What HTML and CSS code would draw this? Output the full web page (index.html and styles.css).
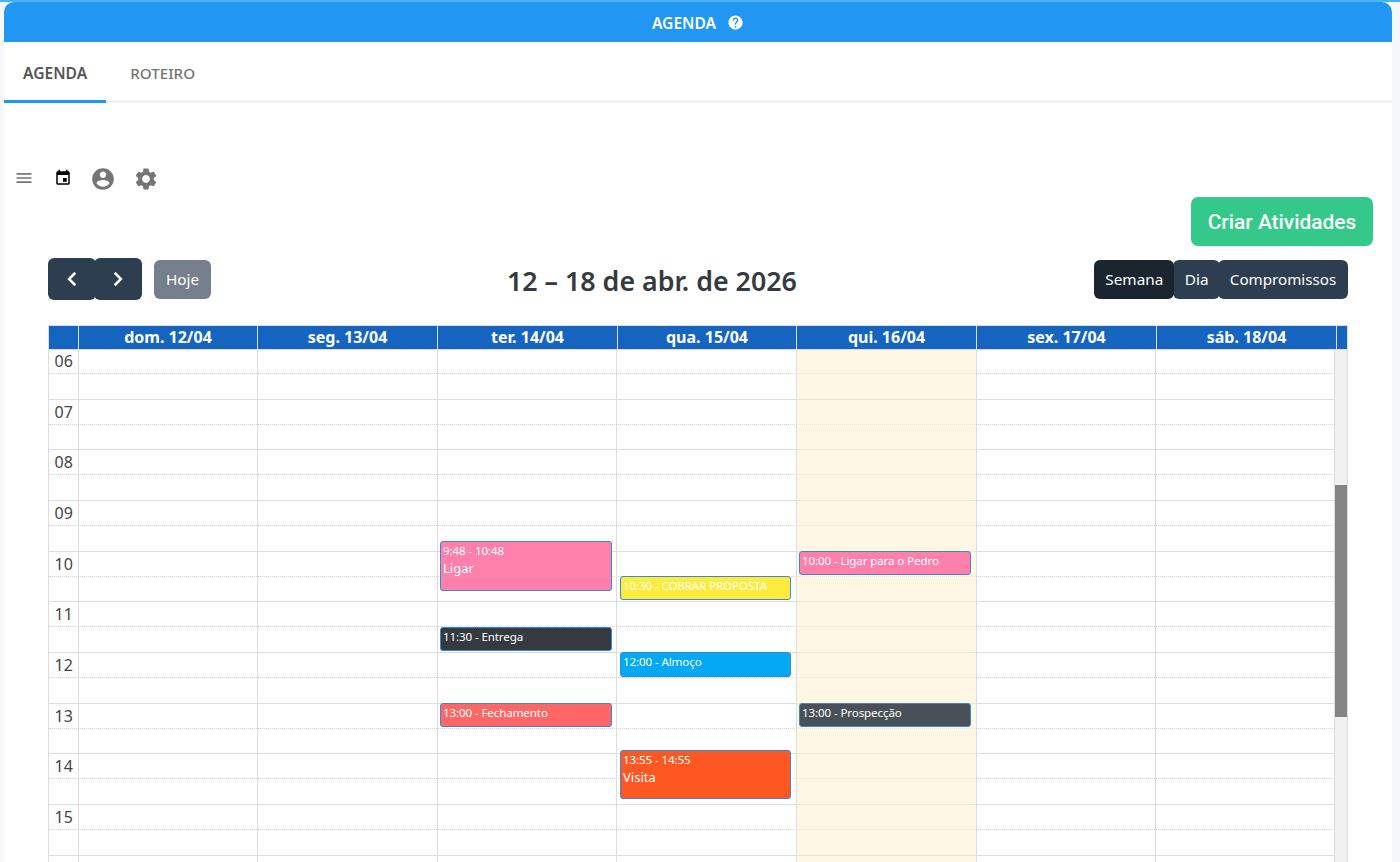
FILE: index.html
```html
<!DOCTYPE html>
<html lang="pt-BR">
<head>
<meta charset="utf-8">
<title>Agenda</title>
<link rel="stylesheet" href="styles.css">
</head>
<body>
<div class="card">
  <header class="topbar">
    <span>AGENDA</span>
    <svg class="help" viewBox="0 0 24 24"><path fill="#fff" d="M12 2C6.48 2 2 6.48 2 12s4.48 10 10 10 10-4.48 10-10S17.52 2 12 2zm1 17h-2v-2h2v2zm2.07-7.75l-.9.92C13.45 12.9 13 13.5 13 15h-2v-.5c0-1.1.45-2.1 1.17-2.83l1.24-1.26c.37-.36.59-.86.59-1.41 0-1.1-.9-2-2-2s-2 .9-2 2H8c0-2.21 1.79-4 4-4s4 1.79 4 4c0 .88-.36 1.68-.93 2.25z"/></svg>
  </header>
  <nav class="tabs">
    <a class="tab active">AGENDA</a>
    <a class="tab">ROTEIRO</a>
  </nav>
  <div class="icons">
    <svg class="ic ic-menu" viewBox="0 0 24 24"><path fill="#757575" d="M3 18h18v-2H3v2zm0-5h18v-2H3v2zm0-7v2h18V6H3z"/></svg>
    <svg class="ic ic-event" viewBox="0 0 24 24"><path fill="#000" d="M17 12h-5v5h5v-5zM16 1v2H8V1H6v2H5c-1.11 0-1.99.9-1.99 2L3 19c0 1.1.89 2 2 2h14c1.1 0 2-.9 2-2V5c0-1.1-.9-2-2-2h-1V1h-2zm3 18H5V8h14v11z"/></svg>
    <svg class="ic ic-user" viewBox="0 0 24 24"><path fill="#757575" d="M12 2C6.48 2 2 6.48 2 12s4.48 10 10 10 10-4.48 10-10S17.52 2 12 2zm0 3c1.66 0 3 1.34 3 3s-1.34 3-3 3-3-1.34-3-3 1.34-3 3-3zm0 14.2c-2.5 0-4.71-1.28-6-3.22.03-1.99 4-3.08 6-3.08 1.99 0 5.97 1.09 6 3.08-1.29 1.94-3.5 3.22-6 3.22z"/></svg>
    <svg class="ic ic-gear" viewBox="0 0 24 24"><path fill="#757575" d="M19.14 12.94c.04-.3.06-.61.06-.94 0-.32-.02-.64-.07-.94l2.03-1.58c.18-.14.23-.41.12-.61l-1.92-3.32c-.12-.22-.37-.29-.59-.22l-2.39.96c-.5-.38-1.03-.7-1.62-.94l-.36-2.54c-.04-.24-.24-.41-.48-.41h-3.84c-.24 0-.43.17-.47.41l-.36 2.54c-.59.24-1.13.57-1.62.94l-2.39-.96c-.22-.08-.47 0-.59.22L2.74 8.87c-.12.21-.08.47.12.61l2.03 1.58c-.05.3-.09.63-.09.94s.02.64.07.94l-2.03 1.58c-.18.14-.23.41-.12.61l1.92 3.32c.12.22.37.29.59.22l2.39-.96c.5.38 1.03.7 1.62.94l.36 2.54c.05.24.24.41.48.41h3.84c.24 0 .44-.17.47-.41l.36-2.54c.59-.24 1.13-.56 1.62-.94l2.39.96c.22.08.47 0 .59-.22l1.92-3.32c.12-.22.07-.47-.12-.61l-2.01-1.58zM12 15.6c-1.98 0-3.6-1.62-3.6-3.6s1.62-3.6 3.6-3.6 3.6 1.62 3.6 3.6-1.62 3.6-3.6 3.6z"/></svg>
  </div>
  <div class="create-row"><button class="create">Criar Atividades</button></div>
  <section class="calendar">
    <div class="toolbar">
      <div class="tb-left">
        <button class="btn nav"><svg viewBox="0 0 24 24"><path d="M16 4.5l-7.5 7.5 7.5 7.5" fill="none" stroke="#fff" stroke-width="3"/></svg></button>
        <button class="btn nav next"><svg viewBox="0 0 24 24"><path d="M8 4.5l7.5 7.5-7.5 7.5" fill="none" stroke="#fff" stroke-width="3"/></svg></button>
        <button class="btn today">Hoje</button>
      </div>
      <h2 class="title">12 – 18 de abr. de 2026</h2>
      <div class="tb-right">
        <button class="btn view active">Semana</button>
        <button class="btn view dia">Dia</button>
        <button class="btn view comp">Compromissos</button>
      </div>
    </div>
    <div class="head">
      <div class="hcell axis"></div>
      <div class="hcell">dom. 12/04</div>
      <div class="hcell">seg. 13/04</div>
      <div class="hcell">ter. 14/04</div>
      <div class="hcell">qua. 15/04</div>
      <div class="hcell">qui. 16/04</div>
      <div class="hcell">sex. 17/04</div>
      <div class="hcell">sáb. 18/04</div>
      <div class="hcell gutter"></div>
    </div>
    <div class="body">
      <div class="grid">
        <div class="slots">
          <div class="hour"><span class="label">06</span></div>
          <div class="hour"><span class="label">07</span></div>
          <div class="hour"><span class="label">08</span></div>
          <div class="hour"><span class="label">09</span></div>
          <div class="hour"><span class="label">10</span></div>
          <div class="hour"><span class="label">11</span></div>
          <div class="hour"><span class="label">12</span></div>
          <div class="hour"><span class="label">13</span></div>
          <div class="hour"><span class="label">14</span></div>
          <div class="hour"><span class="label">15</span></div>
          <div class="hour"><span class="label"></span></div>
        </div>
        <div class="cols">
          <div class="col axis-col"></div>
          <div class="col"></div>
          <div class="col"></div>
          <div class="col">
            <div class="ev pink" style="top:192px;height:50px"><div class="ev-time">9:48 - 10:48</div><div class="ev-title">Ligar</div></div>
            <div class="ev dark" style="top:278px;height:24px"><div class="ev-time">11:30 - Entrega</div></div>
            <div class="ev red" style="top:354px;height:24px"><div class="ev-time">13:00 - Fechamento</div></div>
          </div>
          <div class="col col-wed">
            <div class="ev yellow" style="top:227px;height:24px"><div class="ev-time">10:30 - COBRAR PROPOSTA</div></div>
            <div class="ev blue" style="top:303px;height:25px"><div class="ev-time">12:00 - Almoço</div></div>
            <div class="ev orange" style="top:401px;height:49px"><div class="ev-time">13:55 - 14:55</div><div class="ev-title">Visita</div></div>
          </div>
          <div class="col today-col">
            <div class="ev pink" style="top:202px;height:24px"><div class="ev-time">10:00 - Ligar para o Pedro</div></div>
            <div class="ev slate" style="top:354px;height:24px"><div class="ev-time">13:00 - Prospecção</div></div>
          </div>
          <div class="col"></div>
          <div class="col"></div>
        </div>
      </div>
      <div class="scrollbar"><div class="thumb"></div></div>
    </div>
  </section>
</div>
</body>
</html>
```

FILE: styles.css
```css
* { box-sizing: border-box; }
html, body { margin: 0; height: 862px; overflow: hidden; }
body {
  background: #f5f7fb;
  border-top: 2px solid #45b4f0;
  font-family: "Noto Sans", "Open Sans", sans-serif;
  color: #333;
}
button { font-family: inherit; border: 0; cursor: pointer; }

.card {
  margin: 0 8px 0 4px;
  height: 860px;
  background: #fff;
  overflow: hidden;
  border-radius: 10px 10px 0 0;
}
.topbar {
  height: 40px;
  padding-top: 1px;
  background: #2196f3;
  color: #fff;
  font-size: 15.6px;
  font-weight: 600;
  display: flex;
  align-items: center;
  justify-content: center;
  gap: 11px;
}
.help { width: 17px; height: 17px; }

.tabs {
  height: 61px;
  display: flex;
  border-bottom: 3px solid #f0f0f0;
}
.tab {
  height: 61px;
  padding: 3px 19px 0;
  margin-right: 5px;
  display: flex;
  align-items: center;
  font-size: 15.2px;
  font-weight: 500;
  color: #757575;
  border-bottom: 3px solid transparent;
}
.tab.active {
  font-size: 15.6px;
  font-weight: 600;
  color: #555;
  border-bottom-color: #2196f3;
}

.icons {
  height: 32px;
  margin-top: 60px;
  padding-left: 10px;
  display: flex;
  align-items: center;
}
.ic { display: block; }
.ic-menu { width: 20px; height: 20px; margin-top: -2px; }
.ic-event { width: 18px; height: 18px; margin-left: 20px; margin-top: -3px; }
.ic-user { width: 26px; height: 26px; margin-left: 18px; }
.ic-gear { width: 26px; height: 26px; margin-left: 17px; }

.create-row {
  display: flex;
  justify-content: flex-end;
  padding-right: 19px;
  margin-top: 2px;
}
.create {
  width: 182px;
  height: 49px;
  border-radius: 7px;
  background: #34c98a;
  color: #fff;
  font-family: Roboto, sans-serif;
  font-weight: 500;
  font-size: 20.9px;
}

.calendar { padding: 0 44px; }
.toolbar {
  margin-top: 12px;
  height: 42px;
  display: flex;
  align-items: center;
  justify-content: space-between;
}
.tb-left, .tb-right { display: flex; align-items: center; }
.btn {
  height: 39px;
  color: #fff;
  font-size: 15.3px;
  border-radius: 6px;
  background: #2c3e50;
}
.nav {
  width: 48px;
  height: 42px;
  padding: 0;
  display: flex;
  align-items: center;
  justify-content: center;
}
.nav svg { width: 20px; height: 20px; }
.nav.next { margin-left: -2px; }
.today {
  width: 57px;
  margin-left: 12px;
  padding: 0;
  background: #76808c;
}
.title {
  margin: 3px 0 0;
  position: absolute;
  left: 507px;
  font-size: 26.8px;
  font-weight: 600;
  color: #333a40;
}
.view { padding: 0 11.5px; }
.view.dia { margin-left: -1px; }
.view.comp { margin-left: -2px; width: 130px; padding: 0; font-size: 15.15px; }
.view.active { background: #1a252f; position: relative; z-index: 1; width: 80px; padding: 0; }

.head {
  position: relative;
  z-index: 1;
  margin-top: 25px;
  height: 25px;
  width: 1300px;
  display: grid;
  grid-template-columns: 30px 179px 180px 180px 179px 180px 180px 180px 11px;
  background: #1565c0;
  border: 1px solid #ddd;
}
.hcell {
  border-right: 1px solid #ddd;
  color: #fff;
  font-weight: 700;
  font-size: 16px;
  line-height: 22px;
  text-align: center;
}
.hcell.gutter { border-right: 0; }

.body {
  position: relative;
  margin-top: -1px;
  width: 1300px;
  display: flex;
  border-left: 1px solid #ddd;
  border-right: 1px solid #ddd;
}
.grid {
  position: relative;
  width: 1286px;
  flex: none;
}
.hour {
  height: 50.67px;
  border-bottom: 1px solid #ddd;
  position: relative;
}
.hour::after {
  content: "";
  position: absolute;
  left: 0; right: 0;
  top: 24px;
  border-top: 1px dotted #d4d4d4;
}
.label {
  display: block;
  padding-left: 5.5px;
  font-size: 16px;
  line-height: 25px;
  color: #444;
}
.cols {
  position: absolute;
  inset: 0;
  display: grid;
  grid-template-columns: 30px 179px 180px 179px 180px 180px 179px 179px;
}
.col {
  position: relative;
  border-right: 1px solid #ddd;
}
.today-col { background: rgba(252, 240, 200, .5); }
.ev {
  position: absolute;
  left: 2px;
  right: 4px;
  border: 1px solid #3788d8;
  border-radius: 3px;
  color: #fff;
  padding: 0 2px;
  overflow: hidden;
}
.col-wed .ev { left: 3px; right: 5px; }
.today-col .ev { right: 5px; }
.ev-time { font-size: 11.6px; line-height: 17px; white-space: nowrap; letter-spacing: -.12px; }
.ev-title { font-size: 13px; line-height: 18px; }
.pink { background: #ff80ab; }
.dark { background: #343a40; }
.red { background: #ff6666; }
.yellow { background: #ffeb3b; }
.blue { background: #03a9f4; }
.orange { background: #ff5722; }
.slate { background: #495057; }

.scrollbar {
  width: 12px;
  background: #f0f0f0;
  position: relative;
  flex: none;
}
.thumb {
  position: absolute;
  top: 136px;
  left: 0; right: 0;
  height: 232px;
  background: #848484;
}
```
